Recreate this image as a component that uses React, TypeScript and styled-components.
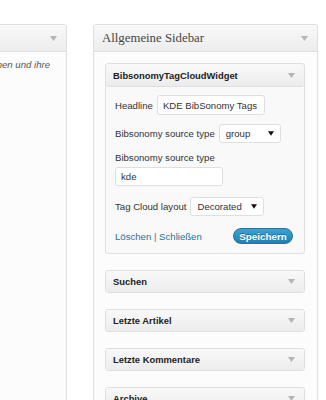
import React from 'react';
import styled, { createGlobalStyle } from 'styled-components';

const GlobalStyle = createGlobalStyle`
    html, body {
        margin: 0;
        padding: 0;
        background: #ffffff;
        overflow: hidden;
    }
    body {
        font-family: 'Liberation Sans', Arial, sans-serif;
        font-size: 9.6px;
        color: #333333;
    }
`;

const colors = {
    border: '#dfdfdf',
    headTop: '#f9f9f9',
    headBottom: '#ececec',
    link: '#21759b'
};

const Page = styled.div`
    display: flex;
    align-items: flex-start;
    padding-top: 24px;
    width: 326px;
    height: 400px;
    box-sizing: border-box;
    overflow: hidden;
`;

const Panel = styled.section<{ $width: number; $offset?: number; $gap?: number }>`
    flex: 0 0 ${(p) => p.$width}px;
    min-width: 0;
    overflow: hidden;
    margin-left: ${(p) => p.$offset || 0}px;
    margin-right: ${(p) => p.$gap || 0}px;
    box-sizing: border-box;
    min-height: 400px;
    background: #fcfcfc;
    border: 1px solid ${colors.border};
    border-radius: 3px;
`;

const PanelHead = styled.div`
    height: 26px;
    display: flex;
    align-items: center;
    justify-content: space-between;
    padding: 0 9px 0 8px;
    background: linear-gradient(to bottom, ${colors.headTop}, ${colors.headBottom});
    border-bottom: 1px solid ${colors.border};
    border-radius: 3px 3px 0 0;
    font-family: 'Liberation Serif', Georgia, serif;
    font-size: 12.8px;
    color: #464646;
`;

const Description = styled.div`
    display: flex;
    justify-content: flex-end;
    overflow: hidden;
    padding: 7px 16px 0 0;
    font-style: italic;
    color: #555555;
    white-space: nowrap;
`;

const PanelBody = styled.div`
    display: flex;
    flex-direction: column;
    gap: 16px;
    padding: 11px 12px 0 11px;
`;

const Widget = styled.div`
    border: 1px solid ${colors.border};
    border-radius: 3px;
    background: #f9f9f9;
`;

const WidgetHead = styled.div<{ $open?: boolean }>`
    height: ${(p) => (p.$open ? 22 : 21)}px;
    display: flex;
    align-items: center;
    justify-content: space-between;
    padding: 0 9px 0 7px;
    background: linear-gradient(to bottom, ${colors.headTop}, ${colors.headBottom});
    border-bottom: ${(p) => (p.$open ? `1px solid ${colors.border}` : 'none')};
    border-radius: 3px;
    font-weight: bold;
    font-size: 9.4px;
    color: #222222;
`;

const Form = styled.div`
    display: flex;
    flex-direction: column;
    padding: 8px 10px 9px 9px;
`;

const Row = styled.div<{ $mt?: number }>`
    display: flex;
    align-items: center;
    gap: 4px;
    margin-top: ${(p) => p.$mt || 0}px;
`;

const Stack = styled.div<{ $mt?: number }>`
    display: flex;
    flex-direction: column;
    gap: 4px;
    margin-top: ${(p) => p.$mt || 0}px;
`;

const Label = styled.span`
    color: #333333;
    white-space: nowrap;
`;

const Input = styled.div<{ $w: number; $h: number }>`
    flex: 0 0 auto;
    width: ${(p) => p.$w}px;
    height: ${(p) => p.$h}px;
    box-sizing: border-box;
    display: flex;
    align-items: center;
    padding: 0 5px;
    background: #ffffff;
    border: 1px solid ${colors.border};
    border-radius: 3px;
    color: #333333;
    white-space: nowrap;
`;

const Select = styled(Input)`
    justify-content: space-between;
    padding: 0 6px 0 6px;
`;

const Actions = styled.div`
    display: flex;
    align-items: center;
    justify-content: space-between;
    margin-top: 12px;
    padding-right: 1px;
`;

const Links = styled.div`
    color: #666666;
    a {
        color: ${colors.link};
        text-decoration: none;
    }
`;

const Button = styled.button`
    height: 16px;
    width: 60px;
    padding: 0;
    border: 1px solid #21759b;
    border-radius: 8px;
    background: linear-gradient(to bottom, #3aa3d2, #2280ad);
    color: #ffffff;
    font-family: 'Liberation Sans', Arial, sans-serif;
    font-size: 9.8px;
    font-weight: bold;
    text-shadow: 0 -1px 0 rgba(0, 0, 0, 0.3);
`;

function Arrow({ dark }: { dark?: boolean }) {
    return (
        <svg width={dark ? 6 : 7} height={5} viewBox="0 0 7 5">
            <path d="M0 0 L7 0 L3.5 5 Z" fill={dark ? '#111111' : '#b5b5b5'} />
        </svg>
    );
}

const collapsed = ['Suchen', 'Letzte Artikel', 'Letzte Kommentare', 'Archive'];

export default function App() {
    return (
        <>
            <GlobalStyle />
            <Page>
                <Panel $width={260} $offset={-193} $gap={26}>
                    <PanelHead>
                        <span />
                        <Arrow />
                    </PanelHead>
                    <Description>
                        <span>Ziehe Widgets hierher, um sie aus der Sidebar zu entfernen und ihre</span>
                    </Description>
                </Panel>
                <Panel $width={225}>
                    <PanelHead>
                        <span>Allgemeine Sidebar</span>
                        <Arrow />
                    </PanelHead>
                    <PanelBody>
                        <Widget>
                            <WidgetHead $open>
                                <span>BibsonomyTagCloudWidget</span>
                                <Arrow />
                            </WidgetHead>
                            <Form>
                                <Row>
                                    <Label>Headline</Label>
                                    <Input $w={108} $h={20}>KDE BibSonomy Tags</Input>
                                </Row>
                                <Row $mt={9}>
                                    <Label>Bibsonomy source type</Label>
                                    <Select $w={62} $h={19}>
                                        <span>group</span>
                                        <Arrow dark />
                                    </Select>
                                </Row>
                                <Stack $mt={9}>
                                    <Label>Bibsonomy source type</Label>
                                    <Input $w={108} $h={19}>kde</Input>
                                </Stack>
                                <Row $mt={11}>
                                    <Label>Tag Cloud layout</Label>
                                    <Select $w={74} $h={19}>
                                        <span>Decorated</span>
                                        <Arrow dark />
                                    </Select>
                                </Row>
                                <Actions>
                                    <Links>
                                        <a href="#">Löschen</a> | <a href="#">Schließen</a>
                                    </Links>
                                    <Button>Speichern</Button>
                                </Actions>
                            </Form>
                        </Widget>
                        {collapsed.map((title) => (
                            <Widget key={title}>
                                <WidgetHead>
                                    <span>{title}</span>
                                    <Arrow />
                                </WidgetHead>
                            </Widget>
                        ))}
                    </PanelBody>
                </Panel>
            </Page>
        </>
    );
}
